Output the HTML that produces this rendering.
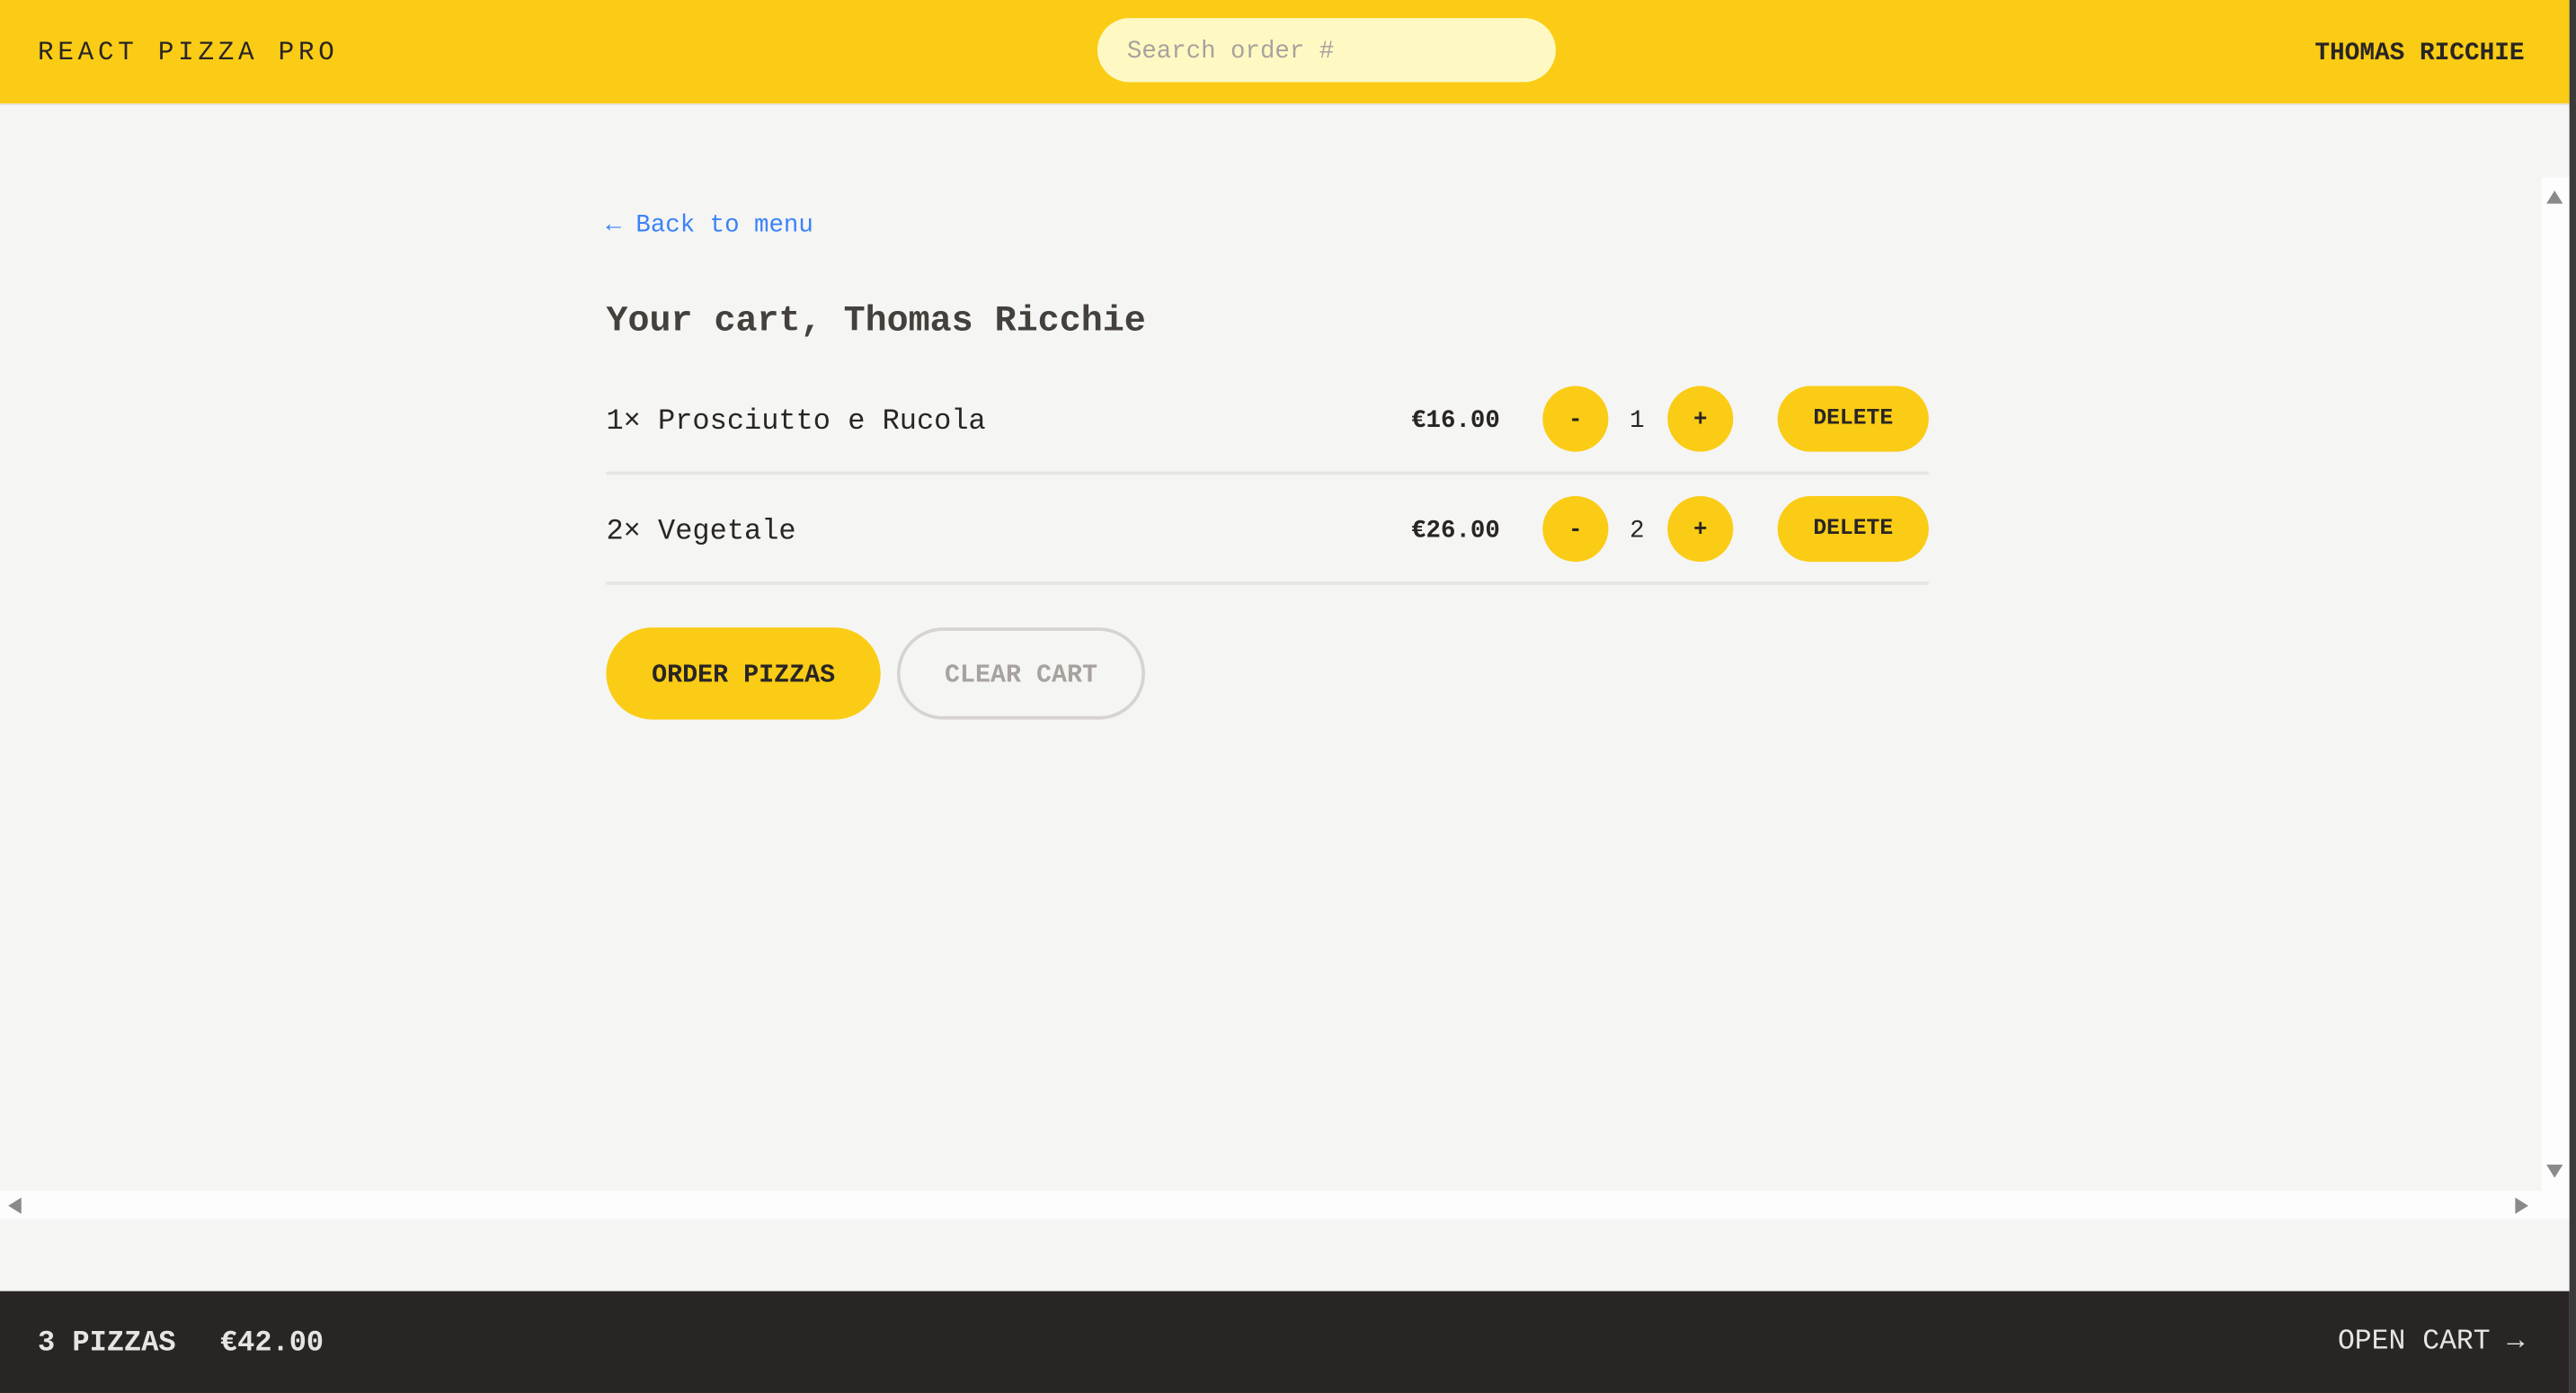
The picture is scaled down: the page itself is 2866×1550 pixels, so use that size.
<!DOCTYPE html>
<html><head><meta charset="utf-8">
<style>
html,body{margin:0;padding:0;width:2866px;height:1550px;overflow:hidden;background:#3a3a3a;}
#w{position:absolute;left:0;top:0;width:1568px;height:848px;transform:scale(1.8278);transform-origin:0 0;background:#f5f5f4;font-family:"Liberation Mono",monospace;color:#292524;overflow:hidden;}
.a{position:absolute;white-space:nowrap;}
.hdr{left:0;top:0;width:1564px;height:63px;background:#facc15;border-bottom:1px solid #e7e5e4;}
.c{position:absolute;border-radius:999px;background:#facc15;display:flex;align-items:center;justify-content:center;font-weight:bold;color:#292524;padding-top:1px;box-sizing:border-box;}
.line{position:absolute;left:369px;width:805px;height:2px;background:#e7e5e4;}
</style></head><body>
<div id="w">
  <div class="a hdr"></div>
  <div class="a" style="left:23px;top:21px;font-size:16px;letter-spacing:2.6px;line-height:22px;color:#292524;">REACT PIZZA PRO</div>
  <div class="a" style="left:668px;top:11px;width:279px;height:39px;border-radius:999px;background:#fef9c3;"></div>
  <div class="a" style="left:686px;top:21px;font-size:15px;line-height:22px;color:#a8a29e;">Search order #</div>
  <div class="a" style="left:1409px;top:21px;font-size:15.2px;line-height:22px;font-weight:bold;color:#292524;">THOMAS RICCHIE</div>

  <div class="a" style="left:369px;top:126.5px;font-size:15px;line-height:22px;color:#3b82f6;">← Back to menu</div>
  <div class="a" style="left:369px;top:181.5px;font-size:21.9px;line-height:28px;font-weight:bold;color:#44403c;">Your cart, Thomas Ricchie</div>

  <div class="a" style="left:369px;top:244.5px;font-size:17.5px;line-height:24px;">1× Prosciutto e Rucola</div>
  <div class="a" style="left:859px;top:245.5px;font-size:15px;line-height:22px;font-weight:bold;">€16.00</div>
  <div class="c" style="left:939px;top:235px;width:40px;height:40px;font-size:14px;">-</div>
  <div class="a" style="left:992px;top:245.5px;font-size:15px;line-height:22px;">1</div>
  <div class="c" style="left:1015px;top:235px;width:40px;height:40px;font-size:14px;">+</div>
  <div class="c" style="left:1082px;top:235px;width:92px;height:40px;font-size:13.5px;">DELETE</div>
  <div class="line" style="top:287px;"></div>

  <div class="a" style="left:369px;top:311.5px;font-size:17.5px;line-height:24px;">2× Vegetale</div>
  <div class="a" style="left:859px;top:312.5px;font-size:15px;line-height:22px;font-weight:bold;">€26.00</div>
  <div class="c" style="left:939px;top:302px;width:40px;height:40px;font-size:14px;">-</div>
  <div class="a" style="left:992px;top:312.5px;font-size:15px;line-height:22px;">2</div>
  <div class="c" style="left:1015px;top:302px;width:40px;height:40px;font-size:14px;">+</div>
  <div class="c" style="left:1082px;top:302px;width:92px;height:40px;font-size:13.5px;">DELETE</div>
  <div class="line" style="top:354px;"></div>

  <div class="c" style="left:369px;top:382px;width:167px;height:56px;font-size:15.5px;">ORDER PIZZAS</div>
  <div class="c" style="left:546px;top:382px;width:151px;height:56px;font-size:15.5px;background:transparent;border:2px solid #d6d3d1;color:#a8a29e;">CLEAR CART</div>

  <div class="a" style="left:1547px;top:108px;width:17px;height:617px;background:#fdfdfd;"></div>
  <div class="a" style="left:1550px;top:116px;width:0;height:0;border-left:5px solid transparent;border-right:5px solid transparent;border-bottom:8px solid #8a8a8a;"></div>
  <div class="a" style="left:1550px;top:709px;width:0;height:0;border-left:5px solid transparent;border-right:5px solid transparent;border-top:8px solid #8a8a8a;"></div>
  <div class="a" style="left:0;top:725px;width:1564px;height:17px;background:#fdfdfd;"></div>
  <div class="a" style="left:5px;top:729px;width:0;height:0;border-top:5px solid transparent;border-bottom:5px solid transparent;border-right:8px solid #8a8a8a;"></div>
  <div class="a" style="left:1531px;top:729px;width:0;height:0;border-top:5px solid transparent;border-bottom:5px solid transparent;border-left:8px solid #8a8a8a;"></div>

  <div class="a" style="left:0;top:786px;width:1564px;height:62px;background:#292524;"></div>
  <div class="a" style="left:23px;top:806px;font-size:17.5px;line-height:24px;color:#e7e5e4;font-weight:bold;">3 PIZZAS</div>
  <div class="a" style="left:134px;top:806px;font-size:17.5px;line-height:24px;color:#e7e5e4;font-weight:bold;">€42.00</div>
  <div class="a" style="left:1423px;top:806px;font-size:17.2px;line-height:24px;color:#e7e5e4;">OPEN CART →</div>

  <div class="a" style="left:1564px;top:0;width:4px;height:848px;background:#3a3a3a;"></div>
</div>
</body></html>
